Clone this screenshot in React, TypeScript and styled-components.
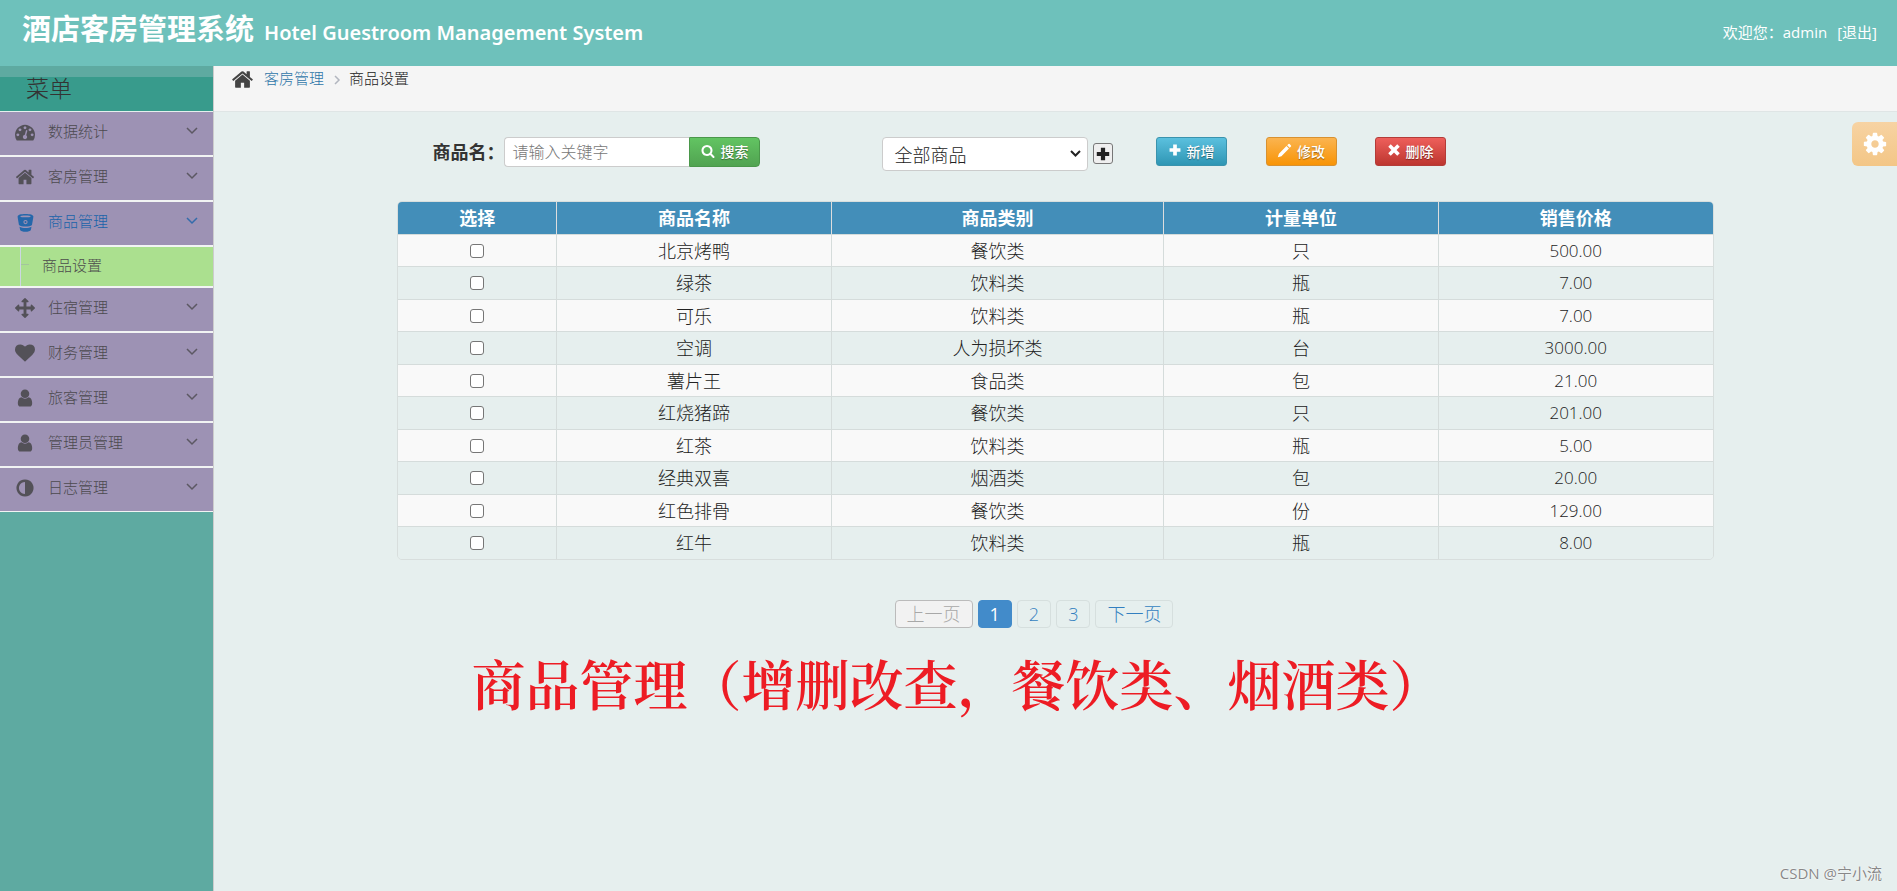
import React from 'react';
import styled, { createGlobalStyle, css } from 'styled-components';

const GlobalStyle = createGlobalStyle`
  *, *::before, *::after { box-sizing: border-box; }
  html, body, #root { height: 100%; margin: 0; }
  body {
    background: #e6efee;
    color: #333;
    font-family: 'Open Sans', 'Noto Sans CJK SC', sans-serif;
    font-size: 15px;
    line-height: 20px;
  }
  a { text-decoration: none; }
  button, input, select { font-family: inherit; margin: 0; }
`;

const glyphs = {
  dashboard:
    'M384 1152q0-53-37.5-90.5t-90.5-37.5-90.5 37.5-37.5 90.5 37.5 90.5 90.5 37.5 90.5-37.5 37.5-90.5zm192-448q0-53-37.5-90.5t-90.5-37.5-90.5 37.5-37.5 90.5 37.5 90.5 90.5 37.5 90.5-37.5 37.5-90.5zm428 481l101-382q6-26-7.5-48.5t-38.5-29.5-48 6.5-30 39.5l-101 382q-60 5-107 43.5t-63 98.5q-20 77 20 146t117 89 146-20 89-117q16-60-6-117t-72-91zm660-33q0-53-37.5-90.5t-90.5-37.5-90.5 37.5-37.5 90.5 37.5 90.5 90.5 37.5 90.5-37.5 37.5-90.5zm-640-640q0-53-37.5-90.5t-90.5-37.5-90.5 37.5-37.5 90.5 37.5 90.5 90.5 37.5 90.5-37.5 37.5-90.5zm448 192q0-53-37.5-90.5t-90.5-37.5-90.5 37.5-37.5 90.5 37.5 90.5 90.5 37.5 90.5-37.5 37.5-90.5zm320 448q0 261-141 483-19 29-54 29h-1402q-35 0-54-29-141-221-141-483 0-182 71-348t191-286 286-191 348-71 348 71 286 191 191 286 71 348z',
  home:
    'M1472 992v480q0 26-19 45t-45 19h-384v-384h-256v384h-384q-26 0-45-19t-19-45v-480q0-1 .5-3t.5-3l575-474 575 474q1 2 1 6zm223-69l-62 74q-8 9-21 11h-3q-13 0-21-7l-692-577-692 577q-12 8-24 7-13-2-21-11l-62-74q-8-10-7-23.5t11-21.5l719-599q32-26 76-26t76 26l244 204v-195q0-14 9-23t23-9h192q14 0 23 9t9 23v408l219 182q10 8 11 21.5t-7 23.5z',
  bucket:
    'M896 100C1330 100 1640 180 1640 330C1640 400 1530 1010 1510 1120C1400 1210 1150 1270 896 1270S392 1210 282 1120C262 1010 152 400 152 330C152 180 462 100 896 100zM896 230C620 230 400 270 400 320S620 410 896 410S1392 370 1392 320S1172 230 896 230zM896 660A200 200 0 1 0 896 1060A200 200 0 1 0 896 660zM896 760A100 100 0 1 1 896 960A100 100 0 1 1 896 760zM330 1300C480 1390 680 1420 896 1420S1312 1390 1462 1300L1400 1600C1370 1700 1130 1770 896 1770S422 1700 392 1600z',
  arrows:
    'M1792 896q0 26-19 45l-256 256q-19 19-45 19t-45-19-19-45v-128h-384v384h128q26 0 45 19t19 45-19 45l-256 256q-19 19-45 19t-45-19l-256-256q-19-19-19-45t19-45 45-19h128v-384h-384v128q0 26-19 45t-45 19-45-19l-256-256q-19-19-19-45t19-45l256-256q19-19 45-19t45 19 19 45v128h384v-384h-128q-26 0-45-19t-19-45 19-45l256-256q19-19 45-19t45 19l256 256q19 19 19 45t-19 45-45 19h-128v384h384v-128q0-26 19-45t45-19 45 19l256 256q19 19 19 45z',
  heart:
    'M896 1664q-26 0-44-18l-624-602q-10-8-27.5-26t-55.5-65.5-68-97.5-53.5-121-23.5-138q0-220 127-344t351-124q62 0 126.5 21.5t120 58 95.5 68.5 76 68q36-36 76-68t95.5-68.5 120-58 126.5-21.5q224 0 351 124t127 344q0 221-229 450l-623 600q-18 18-44 18z',
  user:
    'M1536 1399q0 109-62.5 187t-150.5 78h-854q-88 0-150.5-78t-62.5-187q0-85 8.5-160.5t31.5-152 58.5-131 94-89 134.5-34.5q131 128 313 128t313-128q76 0 134.5 34.5t94 89 58.5 131 31.5 152 8.5 160.5zm-256-887q0 159-112.5 271.5t-271.5 112.5-271.5-112.5-112.5-271.5 112.5-271.5 271.5-112.5 271.5 112.5 112.5 271.5z',
  adjust:
    'M896 1440v-1088q-148 0-273 73t-198 198-73 273 73 273 198 198 273 73zm768-544q0 209-103 385.5t-279.5 279.5-385.5 103-385.5-103-279.5-279.5-103-385.5 103-385.5 279.5-279.5 385.5-103 385.5 103 279.5 279.5 103 385.5z',
  cog:
    'M1152 896q0-106-75-181t-181-75-181 75-75 181 75 181 181 75 181-75 75-181zm512-109v222q0 12-8 23t-20 13l-185 28q-19 54-39 91 35 50 107 138 10 12 10 25t-9 23q-27 37-99 108t-94 71q-12 0-26-9l-138-108q-44 23-91 38-16 136-29 186-7 28-36 28h-222q-14 0-24.5-8.5t-11.5-21.5l-28-184q-49-16-90-37l-141 107q-10 9-25 9-14 0-25-11-126-114-165-168-7-10-7-23 0-12 8-23 15-21 51-66.5t54-70.5q-27-50-41-99l-183-27q-13-2-21-12.5t-8-23.5v-222q0-12 8-23t19-13l186-28q14-46 39-92-40-57-107-138-10-12-10-24 0-10 9-23 26-36 98.5-107.5t94.5-71.5q13 0 26 10l138 107q44-23 91-38 16-136 29-186 7-28 36-28h222q14 0 24.5 8.5t11.5 21.5l28 184q49 16 90 37l142-107q9-9 24-9 13 0 25 10 129 119 165 170 7 8 7 22 0 12-8 23-15 21-51 66.5t-54 70.5q26 50 41 98l183 28q13 2 21 12.5t8 23.5z',
  search:
    'M1216 832q0-185-131.5-316.5t-316.5-131.5-316.5 131.5-131.5 316.5 131.5 316.5 316.5 131.5 316.5-131.5 131.5-316.5zm512 832q0 52-38 90t-90 38q-54 0-90-38l-343-342q-179 124-399 124-143 0-273.5-55.5t-225-150-150-225-55.5-273.5 55.5-273.5 150-225 225-150 273.5-55.5 273.5 55.5 225 150 150 225 55.5 273.5q0 220-124 399l343 343q37 37 37 90z',
  plus: 'M660 200h472v460h460v472h-460v460h-472v-460h-460v-472h460z',
  pencil: 'M100 1700L230 1270L1130 370L1430 670L530 1570zM1220 280L1370 130Q1440 70 1510 130L1670 290Q1730 360 1670 430L1520 580z',
  times: 'M480 160L896 570L1312 160L1632 480L1220 896L1632 1312L1312 1632L896 1220L480 1632L160 1312L570 896L160 480z',
};
type GlyphName = keyof typeof glyphs;

const Svg = styled.svg<{ $size: number }>`
  display: block;
  flex: none;
  width: ${p => p.$size}px;
  height: ${p => p.$size}px;
  fill: currentColor;
`;
const Icon = ({ name, size }: { name: GlyphName; size: number }) => (
  <Svg $size={size} viewBox="0 0 1792 1792" aria-hidden="true">
    <path fillRule={name === 'bucket' ? 'evenodd' : 'nonzero'} d={glyphs[name]} />
  </Svg>
);

const Page = styled.div`
  position: relative;
  min-height: 100%;
  display: flex;
  flex-direction: column;
`;
const TopBar = styled.header`
  display: flex;
  justify-content: space-between;
  align-items: center;
  height: 66px;
  padding: 0 20px 2px 22px;
  background: #6ec1bb;
  color: #fff;
`;
const Brand = styled.h1`
  display: flex;
  align-items: baseline;
  gap: 10px;
  margin: 0;
  padding-bottom: 2px;
  font-size: 29px;
  line-height: 40px;
  font-weight: 700;
  white-space: nowrap;
`;
const BrandSub = styled.small`
  font-family: 'Noto Sans', sans-serif;
  font-size: 20px;
  font-weight: 600;
`;
const Account = styled.div`
  display: flex;
  gap: 10px;
  white-space: nowrap;
`;
const Logout = styled.a`
  color: #fff;
`;

const Body = styled.div`
  flex: 1;
  display: flex;
`;
const Sidebar = styled.nav`
  flex: none;
  width: 214px;
  padding-top: 11px;
  background: #5eaaa1;
  border-right: 1px solid #ccc;
`;
const MenuTitle = styled.h2`
  margin: 0;
  height: 35px;
  padding: 0 26px;
  border-bottom: 1px solid #e5f0ee;
  background: #389b8c;
  font-size: 23px;
  line-height: 22px;
  font-weight: 300;
  color: #333;
`;
const List = styled.ul`
  list-style: none;
  margin: 0;
  padding: 0;
`;
const MenuItem = styled.li`
  &:last-child > a { height: 44px; border-bottom-width: 1px; }
`;
const MenuLink = styled.a<{ $active?: boolean }>`
  display: grid;
  grid-template-columns: 20px 1fr 12px;
  column-gap: 13px;
  align-items: center;
  height: 45px;
  padding: 0 15px 6px;
  border-bottom: 2px solid #f2f4f4;
  background: #9d92b4;
  color: ${p => (p.$active ? '#1963aa' : '#4c4a4f')};
  font-weight: 300;
`;
const IconSlot = styled.span`
  display: flex;
  justify-content: center;
  padding-top: 3px;
  opacity: 0.9;
`;
const Chevron = styled.svg`
  width: 12px;
  height: 8px;
  fill: none;
  stroke: currentColor;
  stroke-width: 1.5;
  opacity: 0.8;
`;
const SubItem = styled.li`
  display: flex;
  height: 41px;
  border-bottom: 2px solid #f2f4f4;
  background: #abe08f;
`;
const SubLink = styled.a`
  flex: 1;
  display: flex;
  align-items: center;
  gap: 13px;
  margin-left: 20px;
  padding-bottom: 4px;
  border-left: 1px solid #ccd7e2;
  color: #4c4c4c;
  font-weight: 300;
  &::before {
    content: '';
    width: 8px;
    border-top: 1px solid #a3c69c;
  }
`;

const Main = styled.main`
  flex: 1;
  min-width: 0;
`;
const Crumbs = styled.div`
  display: flex;
  align-items: flex-start;
  height: 46px;
  padding: 2px 17px;
  border-bottom: 1px solid #dfe5e5;
  background: #f5f5f5;
  color: #444;
  font-weight: 300;
`;
const CrumbLink = styled.a`
  margin: 0 9px 0 10px;
  color: #2f75a8;
`;
const CrumbArrow = styled.svg`
  width: 8px;
  height: 10px;
  margin: 7px 8px 0 0;
  fill: none;
  stroke: #b2b6bf;
  stroke-width: 1.5;
`;
const CrumbCurrent = styled.span`
  color: #222;
`;
const Content = styled.div`
  width: 78.2%;
  margin: 0 auto;
  padding: 25px 0 0;
`;
const Toolbar = styled.div`
  display: grid;
  grid-template-columns: 485fr 273fr 110fr 109fr 339fr;
  align-items: start;
  height: 64px;
`;
const SearchForm = styled.form`
  display: flex;
  padding-left: 35px;
`;
const SearchLabel = styled.label`
  font-size: 18px;
  font-weight: 700;
  line-height: 30px;
  white-space: nowrap;
`;
const SearchInput = styled.input`
  width: 185px;
  height: 30px;
  padding: 0 7px;
  border: 1px solid #ccc;
  border-right: 0;
  border-radius: 4px 0 0 4px;
  background: #fff;
  font-size: 16px;
  font-weight: 300;
  &::placeholder { color: #777; }
`;
const tones = {
  green: css`background: linear-gradient(#62c462, #51a351); border-color: #4a974a;`,
  blue: css`background: linear-gradient(#5bc0de, #2f96b4); border-color: #3a93ad;`,
  orange: css`background: linear-gradient(#fbb450, #f89406); border-color: #d89130;`,
  red: css`background: linear-gradient(#ee5f5b, #bd362f); border-color: #b33c38;`,
};
const ActionButton = styled.button<{ $tone: keyof typeof tones; $attached?: boolean }>`
  display: flex;
  align-items: center;
  justify-content: center;
  gap: 5px;
  width: 71px;
  height: ${p => (p.$attached ? 30 : 29)}px;
  padding: 0;
  border: 1px solid;
  border-radius: ${p => (p.$attached ? '0 4px 4px 0' : '3px')};
  color: #fff;
  font-size: 14px;
  font-weight: 500;
  line-height: 20px;
  text-shadow: 0 1px 1px rgba(0, 0, 0, 0.4);
  ${p => tones[p.$tone]}
  svg { margin-bottom: 3px; }
`;
const Filter = styled.div`
  display: flex;
  gap: 5px;
`;
const SelectWrap = styled.div`
  position: relative;
  width: 206px;
`;
const Select = styled.select`
  appearance: none;
  display: block;
  width: 100%;
  height: 34px;
  padding: 2px 11px 0;
  border: 1px solid #ccc;
  border-radius: 4px;
  background: #fff;
  color: #222;
  font-size: 18px;
  font-weight: 300;
`;
const SelectArrow = styled.svg`
  position: absolute;
  right: 7px;
  top: 13px;
  width: 11px;
  height: 8px;
  fill: none;
  stroke: #222;
  stroke-width: 2;
  pointer-events: none;
`;
const PlusButton = styled.button`
  display: flex;
  align-items: center;
  justify-content: center;
  width: 20px;
  height: 21px;
  margin-top: 6px;
  padding: 0;
  border: 1px solid #777;
  border-radius: 3px;
  background: #efefef;
  color: #222;
`;

const Table = styled.table`
  width: 100%;
  table-layout: fixed;
  border-collapse: separate;
  border-spacing: 0;
  border: 1px solid #d8dedd;
  border-radius: 5px;
  overflow: hidden;
  font-size: 18px;
  text-align: center;
`;
const Col = styled.col<{ $share: number }>`
  width: ${p => p.$share}%;
`;
const HeadCell = styled.th`
  height: 32px;
  padding: 0;
  border-left: 1px solid #ddd;
  background: #438eb9;
  color: #fff;
  font-weight: 700;
  line-height: 24px;
  &:first-child { border-left: 0; }
`;
const Row = styled.tr`
  height: 32px;
  background: #f9f9f9;
  &:nth-child(even) { height: 33px; background: #e6efee; }
`;
const Cell = styled.td<{ $number?: boolean }>`
  padding: 0;
  border-top: 1px solid #d5dcdb;
  border-left: 1px solid #d5dcdb;
  color: #222;
  font-size: ${p => (p.$number ? 17 : 18)}px;
  font-weight: 300;
  line-height: 24px;
  &:first-child { border-left: 0; }
`;
const Check = styled.input`
  appearance: none;
  display: block;
  width: 14px;
  height: 14px;
  margin: 0 auto;
  border: 1px solid #767676;
  border-radius: 3px;
  background: #fff;
`;

const Pager = styled.nav`
  display: flex;
  justify-content: center;
  gap: 5px;
  margin-top: 40px;
  padding-right: 43px;
`;
const PageButton = styled.button<{ $current?: boolean }>`
  min-width: 34px;
  height: 28px;
  padding: 0 11px;
  border: 1px solid #d6dfde;
  border-radius: 4px;
  background: transparent;
  color: #337fc0;
  font-size: 18px;
  font-weight: 300;
  line-height: 26px;
  white-space: nowrap;
  ${p => p.$current && css`background: #428bca; border-color: #428bca; color: #fff; font-weight: 400;`}
  &:disabled { background: #f2f2f2; border-color: #bbb; color: #a8a8a8; }
`;
const Caption = styled.p`
  margin: 16px 0 0;
  padding-left: 74px;
  color: #ed1c24;
  font-family: 'Noto Serif CJK SC', 'Noto Sans CJK SC', serif;
  font-size: 54px;
  font-weight: 600;
  line-height: 78px;
  white-space: nowrap;
`;

const SettingsButton = styled.button`
  position: absolute;
  top: 122px;
  right: 0;
  width: 45px;
  height: 44px;
  padding: 0 0 0 10px;
  border: 0;
  border-radius: 6px 0 0 6px;
  background: linear-gradient(#f7d3a3, #f3c686);
  color: #fff;
`;
const Watermark = styled.span`
  position: absolute;
  right: 15px;
  bottom: 8px;
  color: #888;
  font-size: 15px;
  text-shadow: 0 0 1px #fff, 0 0 2px #fff;
`;

const menu: { icon: GlyphName; label: string; children?: string[] }[] = [
  { icon: 'dashboard', label: '数据统计' },
  { icon: 'home', label: '客房管理' },
  { icon: 'bucket', label: '商品管理', children: ['商品设置'] },
  { icon: 'arrows', label: '住宿管理' },
  { icon: 'heart', label: '财务管理' },
  { icon: 'user', label: '旅客管理' },
  { icon: 'user', label: '管理员管理' },
  { icon: 'adjust', label: '日志管理' },
];

const columns = [
  { title: '选择', share: 12 },
  { title: '商品名称', share: 20.9 },
  { title: '商品类别', share: 25.3 },
  { title: '计量单位', share: 20.9 },
  { title: '销售价格', share: 20.9 },
];

const goods = [
  ['北京烤鸭', '餐饮类', '只', '500.00'],
  ['绿茶', '饮料类', '瓶', '7.00'],
  ['可乐', '饮料类', '瓶', '7.00'],
  ['空调', '人为损坏类', '台', '3000.00'],
  ['薯片王', '食品类', '包', '21.00'],
  ['红烧猪蹄', '餐饮类', '只', '201.00'],
  ['红茶', '饮料类', '瓶', '5.00'],
  ['经典双喜', '烟酒类', '包', '20.00'],
  ['红色排骨', '餐饮类', '份', '129.00'],
  ['红牛', '饮料类', '瓶', '8.00'],
];

export default function App() {
  return (
    <Page>
      <GlobalStyle />
      <TopBar>
        <Brand>
          酒店客房管理系统
          <BrandSub>Hotel Guestroom Management System</BrandSub>
        </Brand>
        <Account>
          <span>欢迎您：admin</span>
          <Logout href="#logout">[退出]</Logout>
        </Account>
      </TopBar>
      <Body>
        <Sidebar aria-label="菜单">
          <MenuTitle>菜单</MenuTitle>
          <List>
            {menu.map(item => (
              <MenuItem key={item.label}>
                <MenuLink href="#menu" $active={!!item.children}>
                  <IconSlot><Icon name={item.icon} size={item.icon === 'bucket' ? 19 : 20} /></IconSlot>
                  {item.label}
                  <Chevron viewBox="0 0 12 8"><path d="M1 1l5 5 5-5" /></Chevron>
                </MenuLink>
                {item.children && (
                  <List>
                    {item.children.map(child => (
                      <SubItem key={child}><SubLink href="#goods">{child}</SubLink></SubItem>
                    ))}
                  </List>
                )}
              </MenuItem>
            ))}
          </List>
        </Sidebar>
        <Main>
          <Crumbs>
            <Icon name="home" size={23} />
            <CrumbLink href="#rooms">客房管理</CrumbLink>
            <CrumbArrow viewBox="0 0 8 10"><path d="M2 1l4 4-4 4" /></CrumbArrow>
            <CrumbCurrent>商品设置</CrumbCurrent>
          </Crumbs>
          <Content>
            <Toolbar>
              <SearchForm onSubmit={e => e.preventDefault()}>
                <SearchLabel htmlFor="keyword">商品名：</SearchLabel>
                <SearchInput id="keyword" type="text" placeholder="请输入关键字" />
                <ActionButton type="submit" $tone="green" $attached><Icon name="search" size={14} />搜索</ActionButton>
              </SearchForm>
              <Filter>
                <SelectWrap>
                  <Select aria-label="商品类别" defaultValue="all">
                    <option value="all">全部商品</option>
                  </Select>
                  <SelectArrow viewBox="0 0 11 8"><path d="M1 1l4.5 4.5L10 1" /></SelectArrow>
                </SelectWrap>
                <PlusButton type="button" aria-label="添加类别"><Icon name="plus" size={16} /></PlusButton>
              </Filter>
              <ActionButton type="button" $tone="blue"><Icon name="plus" size={14} />新增</ActionButton>
              <ActionButton type="button" $tone="orange"><Icon name="pencil" size={15} />修改</ActionButton>
              <ActionButton type="button" $tone="red"><Icon name="times" size={14} />删除</ActionButton>
            </Toolbar>
            <Table>
              <colgroup>{columns.map(c => <Col key={c.title} $share={c.share} />)}</colgroup>
              <thead>
                <tr>{columns.map(c => <HeadCell key={c.title} scope="col">{c.title}</HeadCell>)}</tr>
              </thead>
              <tbody>
                {goods.map(([name, category, unit, price]) => (
                  <Row key={name}>
                    <Cell><Check type="checkbox" aria-label={name} /></Cell>
                    <Cell>{name}</Cell>
                    <Cell>{category}</Cell>
                    <Cell>{unit}</Cell>
                    <Cell $number>{price}</Cell>
                  </Row>
                ))}
              </tbody>
            </Table>
            <Pager aria-label="分页">
              <PageButton type="button" disabled>上一页</PageButton>
              <PageButton type="button" $current aria-current="page">1</PageButton>
              <PageButton type="button">2</PageButton>
              <PageButton type="button">3</PageButton>
              <PageButton type="button">下一页</PageButton>
            </Pager>
            <Caption>商品管理（增删改查，餐饮类、烟酒类）</Caption>
          </Content>
        </Main>
      </Body>
      <SettingsButton type="button" aria-label="设置"><Icon name="cog" size={26} /></SettingsButton>
      <Watermark>CSDN @宁小流</Watermark>
    </Page>
  );
}
